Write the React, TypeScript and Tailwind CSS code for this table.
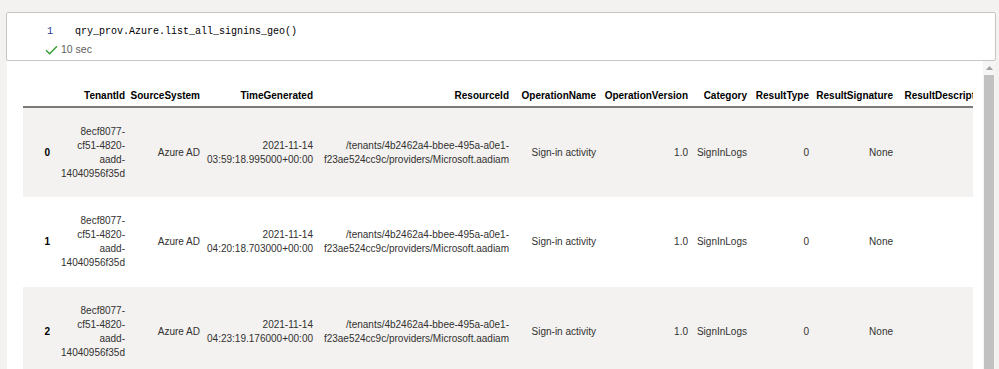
import React from "react";

const columns = [
  { name: "", width: "w-[35px]" },
  { name: "TenantId", width: "w-[72px]" },
  { name: "SourceSystem", width: "w-[75px]" },
  { name: "TimeGenerated", width: "w-[113px]" },
  { name: "ResourceId", width: "w-[196px]" },
  { name: "OperationName", width: "w-[87px]" },
  { name: "OperationVersion", width: "w-[92px]" },
  { name: "Category", width: "w-[59px]" },
  { name: "ResultType", width: "w-[62px]" },
  { name: "ResultSignature", width: "w-[84px]" },
  { name: "ResultDescription", width: "w-[97px]" },
];

const rows = [
  { idx: "0", time: "03:59:18.995000+00:00" },
  { idx: "1", time: "04:20:18.703000+00:00" },
  { idx: "2", time: "04:23:19.176000+00:00" },
];

const Lines = ({ lines }: { lines: string[] }) => (
  <>
    {lines.map((l, i) => (
      <div key={i}>{l}</div>
    ))}
  </>
);

const Scrollbar = () => (
  <div className="flex w-[12px] flex-col items-center bg-[#f5f5f5]">
    <svg width="7" height="4" viewBox="0 0 7 4" className="mt-[5px]">
      <path d="M0 4 L3.5 0 L7 4 Z" fill="#a3a3a3" />
    </svg>
    <div className="mt-[5px] w-[10px] flex-1 bg-[#c1c1c1]" />
  </div>
);

export default function App() {
  return (
    <div className="h-[369px] w-[999px] overflow-hidden bg-[#f3f2f1] pl-[6px] pt-[12px] font-['Liberation_Sans',Arial,sans-serif]">
      {/* code cell */}
      <div className="h-[49px] w-[990px] rounded-[2px] border border-[#c8c6c4] bg-white pt-[11px]">
        <div className="flex h-[14px] items-center font-['Liberation_Mono',monospace] text-[10px] text-[#000]">
          <span className="w-[34px] pl-[40px] text-right text-[#283593]">1</span>
          <span className="ml-[28px]">qry_prov.Azure.list_all_signins_geo()</span>
        </div>
        <div className="mt-[5px] flex h-[14px] items-center pl-[38px] text-[10.5px] text-[#605e5c]">
          <svg width="13" height="10" viewBox="0 0 13 10" className="mr-[3px]">
            <path d="M1 5.2 L4.6 8.8 L12 1.2" fill="none" stroke="#2e9b2e" strokeWidth="1.3" />
          </svg>
          <span>10 sec</span>
        </div>
      </div>

      {/* output */}
      <div className="ml-[1px] flex h-[309px] w-[988px] bg-white">
        <div className="flex-1 pl-[16px] pt-[24px]">
          <div className="w-[950px] overflow-hidden">
            <table className="w-[972px] table-fixed border-collapse text-[10px] leading-[14px] text-[#323130]">
              <colgroup>
                {columns.map((c, i) => (
                  <col key={i} className={c.width} />
                ))}
              </colgroup>
              <thead>
                <tr className="h-[22px] border-b-2 border-[#7a7a7a]">
                  {columns.map((c, i) => (
                    <th
                      key={i}
                      className="whitespace-nowrap pr-[5px] text-right align-middle font-bold text-[#000]"
                    >
                      {c.name}
                    </th>
                  ))}
                </tr>
              </thead>
              <tbody>
                {rows.map((r, i) => (
                  <tr key={r.idx} className={`h-[90px] ${i % 2 === 0 ? "bg-[#f3f2f1]" : "bg-white"}`}>
                    <th className="pr-[8px] text-right align-middle font-bold text-[#000]">{r.idx}</th>
                    <td className="whitespace-nowrap pr-[5px] text-right align-middle">
                      <Lines lines={["8ecf8077-", "cf51-4820-", "aadd-", "14040956f35d"]} />
                    </td>
                    <td className="whitespace-nowrap pr-[5px] text-right align-middle">Azure AD</td>
                    <td className="whitespace-nowrap pr-[5px] text-right align-middle">
                      <Lines lines={["2021-11-14", r.time]} />
                    </td>
                    <td className="whitespace-nowrap pr-[5px] text-right align-middle">
                      <Lines
                        lines={[
                          "/tenants/4b2462a4-bbee-495a-a0e1-",
                          "f23ae524cc9c/providers/Microsoft.aadiam",
                        ]}
                      />
                    </td>
                    <td className="whitespace-nowrap pr-[5px] text-right align-middle">Sign-in activity</td>
                    <td className="whitespace-nowrap pr-[5px] text-right align-middle">1.0</td>
                    <td className="whitespace-nowrap pr-[5px] text-right align-middle">SignInLogs</td>
                    <td className="whitespace-nowrap pr-[5px] text-right align-middle">0</td>
                    <td className="whitespace-nowrap pr-[5px] text-right align-middle">None</td>
                    <td className="whitespace-nowrap pr-[5px] text-right align-middle"></td>
                  </tr>
                ))}
              </tbody>
            </table>
          </div>
        </div>
        <Scrollbar />
      </div>
    </div>
  );
}
